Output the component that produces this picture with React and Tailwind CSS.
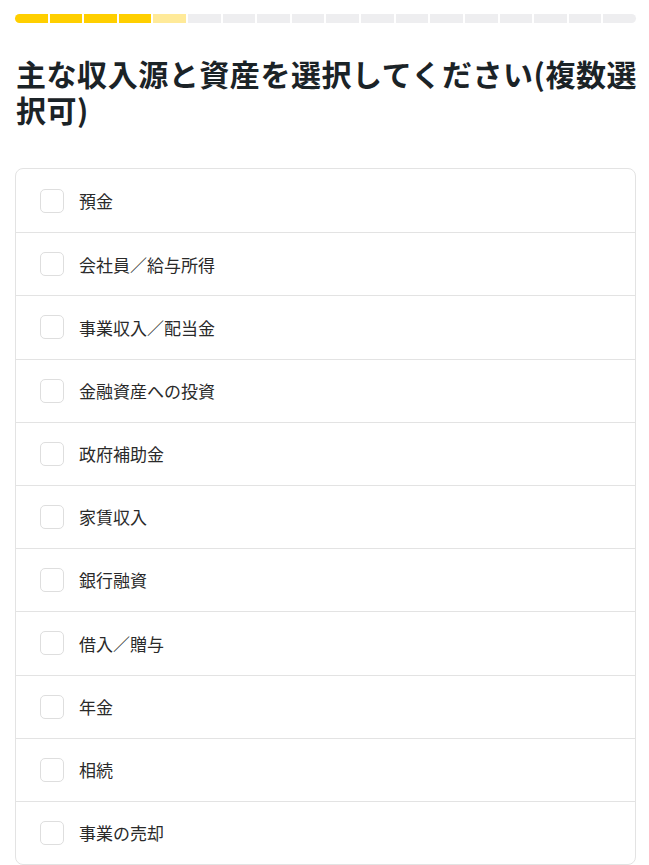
export default function App() {
  const segs = Array.from({ length: 18 }, (_, i) => i);
  const items = [
    "預金",
    "会社員／給与所得",
    "事業収入／配当金",
    "金融資産への投資",
    "政府補助金",
    "家賃収入",
    "銀行融資",
    "借入／贈与",
    "年金",
    "相続",
    "事業の売却",
  ];
  return (
    <div
      className="w-[649px] h-[865px] overflow-hidden bg-white pl-[15px] pr-[13px]"
      style={{ fontFamily: '"Noto Sans CJK JP", "Noto Sans", sans-serif' }}
    >
      <div className="pt-[14px] flex gap-[2px] h-[23px]">
        {segs.map((i) => (
          <div
            key={i}
            className={
              "flex-1 h-[9px] " +
              (i < 4 ? "bg-[#ffcf00] " : i === 4 ? "bg-[#ffea99] " : "bg-[#eeeef0] ") +
              (i === 0 ? "rounded-l-full " : "") +
              (i === 17 ? "rounded-r-full" : "")
            }
          />
        ))}
      </div>
      <h1 className="mt-[32px] pl-[1px] -mr-[10px] text-[30px] leading-[36px] font-bold text-[#1b2327] tracking-[0.55px]">
        主な収入源と資産を選択してください(複数選択可)
      </h1>
      <div className="mt-[41px] border border-[#e3e3e3] rounded-lg">
        {items.map((t, i) => (
          <div
            key={t}
            className={
              "flex items-center h-[63.2px] pl-[24px] gap-[15px] " +
              (i > 0 ? "border-t border-[#e3e3e3]" : "")
            }
          >
            <div className="w-[24px] h-[24px] rounded-[5px] border border-[#dedede] bg-white shrink-0" />
            <span className="text-[17px] text-[#2a2a2a]">{t}</span>
          </div>
        ))}
      </div>
    </div>
  );
}
